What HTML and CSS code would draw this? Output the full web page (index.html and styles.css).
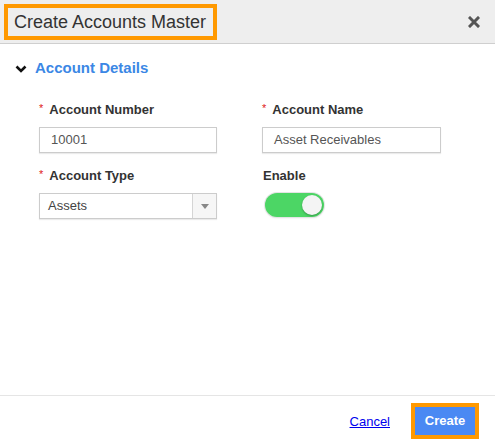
FILE: index.html
```html
<!DOCTYPE html>
<html>
<head>
<meta charset="utf-8">
<link rel="stylesheet" href="styles.css">
</head>
<body>
<div class="modal">
  <div class="header">
    <div class="title-box">Create Accounts Master</div>
    <svg class="close" width="12" height="12" viewBox="0 0 12 12"><path d="M2 2 L10 10 M10 2 L2 10" stroke="#555" stroke-width="3" stroke-linecap="square"/></svg>
  </div>
  <div class="content">
    <div class="section-title">
      <svg class="chevron" width="12" height="8" viewBox="0 0 12 8"><path d="M1.5 1.5 L6 6 L10.5 1.5" fill="none" stroke="#111" stroke-width="2.6"/></svg>
      <span>Account Details</span>
    </div>
    <div class="form">
      <div class="field">
        <div class="label"><span class="req">*</span>Account Number</div>
        <div class="input">10001</div>
      </div>
      <div class="field">
        <div class="label"><span class="req">*</span>Account Name</div>
        <div class="input">Asset Receivables</div>
      </div>
      <div class="field">
        <div class="label"><span class="req">*</span>Account Type</div>
        <div class="select">
          <div class="select-value">Assets</div>
          <div class="select-arrow"><svg width="8" height="5" viewBox="0 0 8 5"><path d="M0 0 L8 0 L4 5 Z" fill="#888"/></svg></div>
        </div>
      </div>
      <div class="field">
        <div class="label plain">Enable</div>
        <div class="toggle"><div class="knob"></div></div>
      </div>
    </div>
  </div>
  <div class="footer">
    <a class="cancel" href="#">Cancel</a>
    <div class="create-wrap"><div class="create">Create</div></div>
  </div>
</div>
</body>
</html>
```
FILE: styles.css
```css
html, body {
  margin: 0;
  padding: 0;
  background: #fff;
}
body {
  font-family: "Liberation Sans", Arial, sans-serif;
  color: #333;
}
.modal {
  width: 495px;
  height: 444px;
  display: flex;
  flex-direction: column;
  box-sizing: border-box;
}
.header {
  height: 43px;
  background: #eeeeee;
  border-bottom: 1px solid #cfcfcf;
  display: flex;
  align-items: center;
  justify-content: space-between;
  padding: 0 15px 0 4px;
  flex-shrink: 0;
}
.title-box {
  border: 4px solid #ff9900;
  height: 28px;
  line-height: 28px;
  padding: 0 6px;
  font-size: 18px;
  color: #333;
  width: 193px;
  margin-top: 1px;
}
.close {
  display: block;
  margin-top: 1px;
}
.content {
  flex: 1;
  padding-top: 14px;
}
.section-title {
  display: flex;
  align-items: center;
  height: 18px;
  padding-left: 15px;
  font-size: 15px;
  font-weight: bold;
  color: #3b87e5;
}
.chevron {
  display: block;
  margin-right: 8px;
  margin-top: 3px;
}
.form {
  display: grid;
  grid-template-columns: 178px 179px;
  column-gap: 45px;
  row-gap: 15px;
  padding-left: 39px;
  margin-top: 26px;
}
.field {
  display: flex;
  flex-direction: column;
  gap: 9px;
}
.label {
  font-size: 13px;
  font-weight: bold;
  line-height: 16px;
  height: 16px;
  color: #333;
}
.label.plain {
  padding-left: 1px;
}
.req {
  color: #e02020;
  font-size: 11px;
  font-weight: normal;
  margin-right: 6px;
  position: relative;
  top: -2px;
}
.input {
  height: 26px;
  box-sizing: border-box;
  border: 1px solid #cccccc;
  box-shadow: 0 1px 1px rgba(0,0,0,0.08);
  font-size: 13px;
  line-height: 24px;
  padding-left: 11px;
  color: #555;
}
.select {
  height: 26px;
  box-sizing: border-box;
  border: 1px solid #cccccc;
  box-shadow: 0 1px 1px rgba(0,0,0,0.08);
  display: flex;
  font-size: 13px;
  color: #444;
}
.select-value {
  flex: 1;
  line-height: 24px;
  padding-left: 8px;
}
.select-arrow {
  width: 23px;
  border-left: 1px solid #d5d5d5;
  background: #f6f6f6;
  display: flex;
  align-items: center;
  justify-content: center;
}
.select-arrow svg {
  display: block;
}
.toggle {
  width: 59px;
  height: 24px;
  margin-left: 3px;
  border-radius: 13px;
  background: #4cd665;
  box-shadow: 0 0 0 1px #e4e4e4, 0 1px 2px rgba(0,0,0,0.12);
  position: relative;
}
.knob {
  position: absolute;
  right: 2px;
  top: 2px;
  width: 20px;
  height: 20px;
  border-radius: 50%;
  background: #f4f4f4;
  box-shadow: 0 1px 2px rgba(0,0,0,0.3);
}
.footer {
  height: 48px;
  border-top: 1px solid #e5e5e5;
  display: flex;
  align-items: center;
  justify-content: flex-end;
  padding-right: 16px;
  flex-shrink: 0;
}
.cancel {
  font-size: 13px;
  color: #0000ee;
  text-decoration: underline;
  margin-right: 21px;
  margin-top: 2px;
}
.create-wrap {
  border: 4px solid #ff9900;
  margin-top: 2px;
}
.create {
  width: 60px;
  height: 28px;
  line-height: 28px;
  text-align: center;
  background: #4a89f3;
  color: #fff;
  font-size: 13px;
  font-weight: bold;
}
```
